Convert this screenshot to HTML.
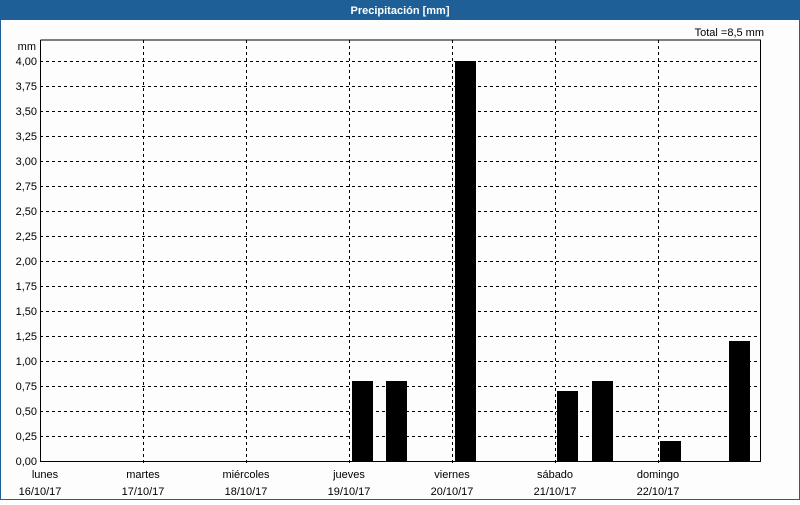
<!DOCTYPE html>
<html><head><style>
body{margin:0;width:800px;height:500px;overflow:hidden;background:#fff;font-family:"Liberation Sans",sans-serif}
</style></head><body>
<svg width="800" height="500" xmlns="http://www.w3.org/2000/svg" font-family="Liberation Sans, sans-serif" font-size="11">
<rect x="0" y="0" width="800" height="500" fill="#fdfdfd"/>
<rect x="0" y="0" width="800" height="20" fill="#1d5f96"/>
<rect x="0.5" y="0.5" width="799" height="499" fill="none" stroke="#1d5f96"/>
<text x="400" y="14" fill="#fff" font-weight="bold" text-anchor="middle">Precipitación [mm]</text>
<text x="764" y="36" text-anchor="end" fill="#000">Total =8,5 mm</text>
<text x="36" y="50" text-anchor="end">mm</text>
<g stroke="#000" stroke-dasharray="3,3" stroke-width="1">
<path d="M40 61.5H760M40 86.5H760M40 111.5H760M40 136.5H760M40 161.5H760M40 186.5H760M40 211.5H760M40 236.5H760M40 261.5H760M40 286.5H760M40 311.5H760M40 336.5H760M40 361.5H760M40 386.5H760M40 411.5H760M40 436.5H760"/>
<path d="M143.5 40V465M246.5 40V465M349.5 40V465M452.5 40V465M555.5 40V465M658.5 40V465"/>
</g>
<g fill="#000">
<rect x="352" y="381" width="21" height="80"/>
<rect x="386" y="381" width="21" height="80"/>
<rect x="455" y="61" width="21" height="400"/>
<rect x="557" y="391" width="21" height="70"/>
<rect x="592" y="381" width="21" height="80"/>
<rect x="660" y="441" width="21" height="20"/>
<rect x="729" y="341" width="21" height="120"/>
</g>
<path d="M40.5 40V461.5H760.5V40H40.5" fill="none" stroke="#000"/>
<g text-anchor="end">
<text x="37" y="65">4,00</text><text x="37" y="90">3,75</text><text x="37" y="115">3,50</text><text x="37" y="140">3,25</text>
<text x="37" y="165">3,00</text><text x="37" y="190">2,75</text><text x="37" y="215">2,50</text><text x="37" y="240">2,25</text>
<text x="37" y="265">2,00</text><text x="37" y="290">1,75</text><text x="37" y="315">1,50</text><text x="37" y="340">1,25</text>
<text x="37" y="365">1,00</text><text x="37" y="390">0,75</text><text x="37" y="415">0,50</text><text x="37" y="440">0,25</text>
<text x="37" y="465">0,00</text>
</g>
<g text-anchor="middle">
<text x="45" y="478">lunes</text><text x="40" y="495">16/10/17</text>
<text x="143" y="478">martes</text><text x="143" y="495">17/10/17</text>
<text x="246" y="478">miércoles</text><text x="246" y="495">18/10/17</text>
<text x="349" y="478">jueves</text><text x="349" y="495">19/10/17</text>
<text x="452" y="478">viernes</text><text x="452" y="495">20/10/17</text>
<text x="555" y="478">sábado</text><text x="555" y="495">21/10/17</text>
<text x="658" y="478">domingo</text><text x="658" y="495">22/10/17</text>
</g>
</svg>
</body></html>
